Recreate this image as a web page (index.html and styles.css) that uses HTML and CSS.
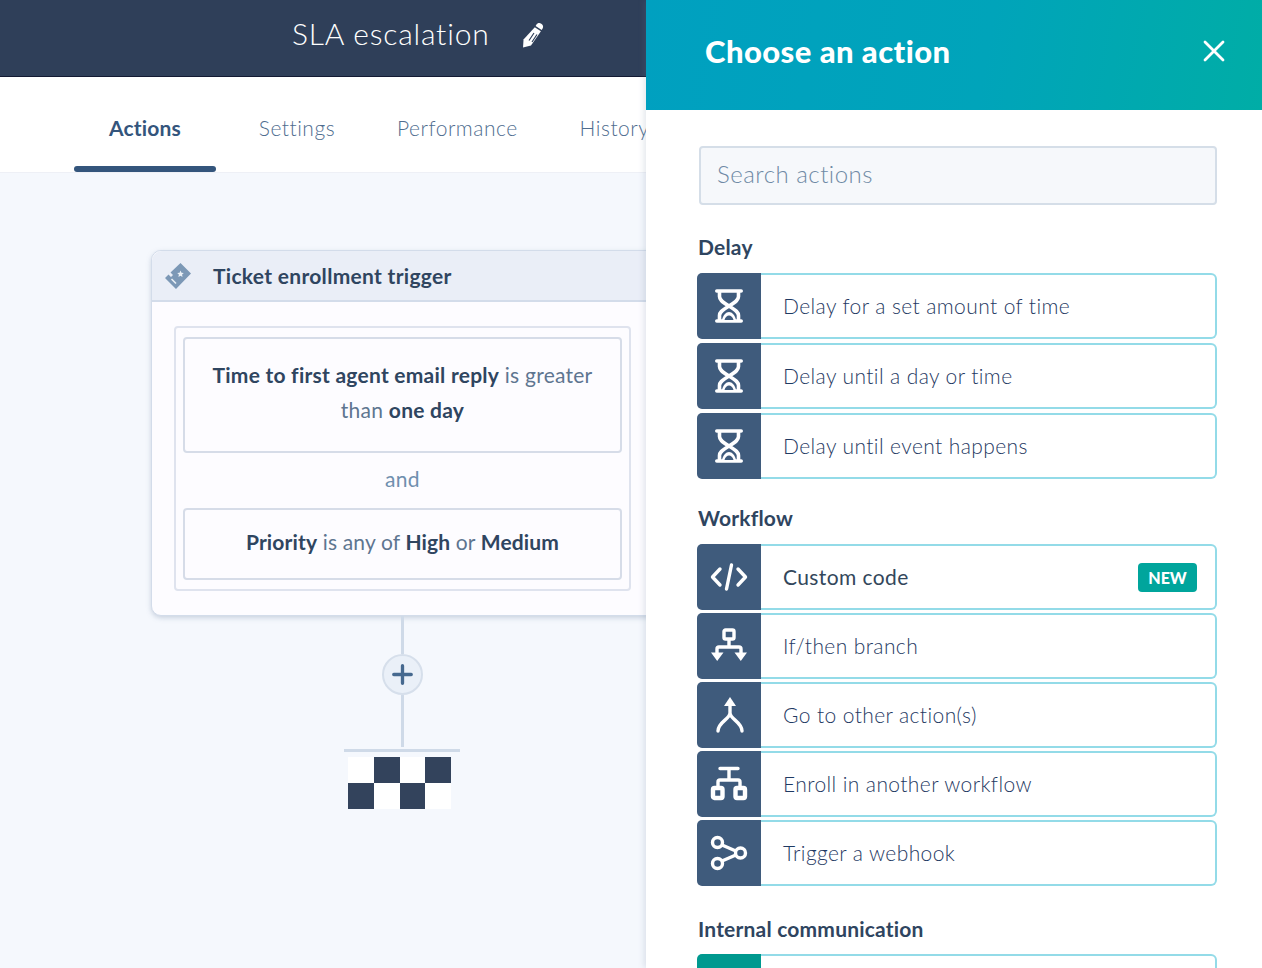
FILE: index.html
```html
<!DOCTYPE html>
<html lang="en">
<head>
<meta charset="utf-8">
<title>SLA escalation</title>
<link rel="stylesheet" href="styles.css">
</head>
<body>
<svg class="defs" width="0" height="0" aria-hidden="true">
  <symbol id="i-hourglass" viewBox="0 0 28 34">
    <path d="M1.800 2h24.400M1.800 32h24.400" fill="none" stroke="#fff" stroke-width="3.600" stroke-linecap="round"/>
    <path d="M4.500 2v5.500c0 3 2 5 9.500 9.500 7.500 4.500 9.500 6.500 9.500 9.500V32M23.500 2v5.500c0 3-2 5-9.500 9.500-7.500 4.500-9.500 6.500-9.500 9.500V32" fill="none" stroke="#fff" stroke-width="3.600"/>
    <path d="M7 31c1-5 4-8 7-8s6 3 7 8z" fill="#fff"/>
    <path d="M9.500 31c.8-3 2.600-4.600 4.500-4.600s3.700 1.600 4.500 4.600z" fill="#3f5b7c"/>
  </symbol>
</svg>

<div class="app">
  <main class="main">
    <header class="topbar">
      <h1 class="topbar-title">SLA escalation</h1>
      <svg class="pencil" viewBox="0 0 22 26" aria-hidden="true">
        <path d="M14.500 2.500c1-1.500 3-2 4.800-.8 1.900 1.200 2.300 3.200 1.300 4.800L19.700 8 13.600 4z" fill="#fff"/>
        <path d="M12.800 5.200 18.900 9.200 9 23.500 1 25.500 1.500 17.500z" fill="#fff"/>
        <path d="M12 11 7 18.500M15 12.500 10 20" stroke="#2f3f59" stroke-width="1.200" fill="none"/>
      </svg>
    </header>

    <nav class="tabs">
      <a class="tab tab-active">Actions</a>
      <a class="tab">Settings</a>
      <a class="tab">Performance</a>
      <a class="tab">History</a>
    </nav>

    <section class="canvas">
      <article class="card">
        <div class="card-head">
          <svg class="ticket" viewBox="0 0 28 28" aria-hidden="true">
            <path d="M16.500 1 27 11.500 12 27 1 16l3.500-3.500 2.500 2.500 2-2-2.500-2.500z" fill="#7c98b6"/>
            <path d="M16.500 8.500l1 2.200 2.300.3-1.700 1.600.4 2.400-2-1.200-2.100 1.100.5-2.300-1.700-1.600 2.400-.3z" fill="#eaf0f6"/>
            <path d="M7.500 17 12 21.500" stroke="#eaf0f6" stroke-width="1.600"/>
          </svg>
          <span>Ticket enrollment trigger</span>
        </div>
        <div class="card-body">
          <div class="group">
            <div class="clause clause-tall">
              <p><b>Time to first agent email reply</b> is greater</p>
              <p>than <b>one day</b></p>
            </div>
            <div class="and">and</div>
            <div class="clause clause-short">
              <p><b>Priority</b> is any of <b>High</b> or <b>Medium</b></p>
            </div>
          </div>
        </div>
      </article>

      <div class="connector">
        <span class="line line-top"></span>
        <button class="add" aria-label="Add action">
          <svg viewBox="0 0 24 24" aria-hidden="true"><path d="M12 2v20M2 12h20" stroke="#46698f" stroke-width="3.800" stroke-linecap="round"/></svg>
        </button>
        <span class="line line-bottom"></span>
        <span class="flag-pole"></span>
        <div class="flag">
          <i></i><i class="dark"></i><i></i><i class="dark"></i>
          <i class="dark"></i><i></i><i class="dark"></i><i></i>
        </div>
      </div>
    </section>
  </main>

  <aside class="panel">
    <header class="panel-head">
      <h2>Choose an action</h2>
      <svg class="close" viewBox="0 0 22 22" aria-hidden="true"><path d="M2 2l18 18M20 2 2 20" stroke="#fff" stroke-width="2.800" stroke-linecap="round"/></svg>
    </header>
    <div class="panel-body">
      <div class="search">Search actions</div>

      <h3 class="group-title title-delay">Delay</h3>
      <ul class="rows">
        <li class="row"><span class="row-icon"><svg class="ic-hg"><use href="#i-hourglass"/></svg></span><span class="row-main"><span class="row-text">Delay for a set amount of time</span></span></li>
        <li class="row"><span class="row-icon"><svg class="ic-hg"><use href="#i-hourglass"/></svg></span><span class="row-main"><span class="row-text">Delay until a day or time</span></span></li>
        <li class="row"><span class="row-icon"><svg class="ic-hg"><use href="#i-hourglass"/></svg></span><span class="row-main"><span class="row-text">Delay until event happens</span></span></li>
      </ul>

      <h3 class="group-title title-workflow">Workflow</h3>
      <ul class="rows rows-workflow">
        <li class="row">
          <span class="row-icon"><svg class="ic" viewBox="0 0 38 36" aria-hidden="true"><path d="M10 10 2.500 18 10 26M28 10l7.500 8L28 26M21.500 6 16.500 30" fill="none" stroke="#fff" stroke-width="3.400" stroke-linecap="round" stroke-linejoin="round"/></svg></span>
          <span class="row-main"><span class="row-text row-text-dark">Custom code</span><span class="badge">NEW</span></span>
        </li>
        <li class="row">
          <span class="row-icon"><svg class="ic" viewBox="0 0 38 36" aria-hidden="true"><rect x="14" y="2" width="10" height="9" rx="1.500" fill="none" stroke="#fff" stroke-width="3.400"/><path d="M19 11v8M7 27v-6a2 2 0 0 1 2-2h20a2 2 0 0 1 2 2v6" fill="none" stroke="#fff" stroke-width="3.400"/><path d="M1 24.500h12.500L7.200 33zM24.500 24.500H37L30.800 33z" fill="#fff"/></svg></span>
          <span class="row-main"><span class="row-text">If/then branch</span></span>
        </li>
        <li class="row">
          <span class="row-icon"><svg class="ic" viewBox="0 0 38 36" aria-hidden="true"><path d="M20 0 14 9h12z" fill="#fff"/><path d="M20 7v9c0 6-12 9-12 18M20 16c0 6 12 9 12 18" fill="none" stroke="#fff" stroke-width="3.400" stroke-linecap="round"/></svg></span>
          <span class="row-main"><span class="row-text">Go to other action(s)</span></span>
        </li>
        <li class="row">
          <span class="row-icon"><svg class="ic" viewBox="0 0 38 36" aria-hidden="true"><path d="M10 2.500h18M19 2.500V14M8 22v-6a2 2 0 0 1 2-2h18a2 2 0 0 1 2 2v6" fill="none" stroke="#fff" stroke-width="3.400" stroke-linecap="round"/><rect x="3" y="22" width="9.500" height="10" rx="1.500" fill="none" stroke="#fff" stroke-width="4.400"/><rect x="25.500" y="22" width="9.500" height="10" rx="1.500" fill="none" stroke="#fff" stroke-width="4.400"/></svg></span>
          <span class="row-main"><span class="row-text">Enroll in another workflow</span></span>
        </li>
        <li class="row">
          <span class="row-icon"><svg class="ic" viewBox="0 0 38 36" aria-hidden="true"><circle cx="7.500" cy="7.500" r="5" fill="none" stroke="#fff" stroke-width="3.400"/><circle cx="7.500" cy="28.500" r="5" fill="none" stroke="#fff" stroke-width="3.400"/><circle cx="30.500" cy="18" r="5" fill="none" stroke="#fff" stroke-width="3.400"/><path d="M12 10 25.800 16M12 26 25.800 20" stroke="#fff" stroke-width="3.400" fill="none"/></svg></span>
          <span class="row-main"><span class="row-text">Trigger a webhook</span></span>
        </li>
      </ul>

      <h3 class="group-title title-internal">Internal communication</h3>
      <ul class="rows">
        <li class="row row-teal"><span class="row-icon"></span><span class="row-main"></span></li>
      </ul>
    </div>
  </aside>
</div>
</body>
</html>
```

FILE: styles.css
```css
* { box-sizing: border-box; }
html, body { margin: 0; height: 100%; overflow: hidden; }
body {
  font-family: "Lato", "Noto Sans", sans-serif; color: #33475b; background: #f5f8fd;
  font-variant-ligatures: none;
}
.defs { position: absolute; }
h1, h2, h3, p, ul { margin: 0; padding: 0; }
ul { list-style: none; }

.app { display: flex; width: 1262px; height: 968px; overflow: hidden; }

.main { width: 646px; flex: none; display: flex; flex-direction: column; }
.topbar {
  height: 77px; background: #2f3f59; border-bottom: 1px solid #131a33;
  display: flex; align-items: center; padding: 0 0 10px 292px;
}
.topbar-title { font-size: 30px; font-weight: 300; color: #fff; letter-spacing: .8px; line-height: 1; }
.pencil { width: 22px; height: 26px; margin-left: 32px; margin-top: 4px; }

.tabs {
  height: 96px; background: #fff; border-bottom: 1px solid #eef0f6;
  display: flex; padding-left: 74px; white-space: nowrap;
}
.tab {
  height: 95px; padding: 5px 31px 0; display: flex; align-items: center;
  font-size: 21px; color: #4f6d8f; letter-spacing: .5px; font-weight: 300;
}
.tab-active {
  padding: 5px 35px 0; margin-right: 12px; font-weight: 700; color: #34557c;
  letter-spacing: .15px; position: relative;
}
.tab-active::after {
  content: ""; position: absolute; left: 0; right: 0; bottom: 0; height: 6px;
  background: #34557c; border-radius: 3px;
}

.canvas { flex: 1; padding: 77px 0 0 151px; background: #f5f8fd; }
.card {
  width: 502px; height: 366px; background: #fdfcff; border: 1px solid #d3dcea;
  border-radius: 10px 0 0 10px; box-shadow: 0 2px 5px rgba(120,140,170,.35);
}
.card-head {
  height: 51px; background: #eaeef7; border-bottom: 2px solid #d3dcea;
  border-radius: 10px 0 0 0; display: flex; align-items: center; padding-left: 12px;
  font-size: 21px; font-weight: 700; color: #2f4560; letter-spacing: .3px;
}
.ticket { width: 28px; height: 28px; margin-right: 21px; }
.card-body { padding: 24px 22px 0; }
.group {
  width: 457px; height: 265px; border: 2px solid #dfe3ee; border-radius: 4px;
  padding: 9px 7px 0;
}
.clause {
  border: 2px solid #d6dce8; border-radius: 4px; text-align: center;
  font-size: 21px; line-height: 35px; color: #5e7590; letter-spacing: .25px;
  white-space: nowrap;
}
.clause b { font-weight: 700; color: #2f4560; }
.clause-tall { height: 116px; padding-top: 18px; }
.clause-short { height: 72px; padding-top: 14px; letter-spacing: .15px; }
.and {
  height: 55px; padding-bottom: 4px; display: flex; align-items: center; justify-content: center;
  font-size: 21px; color: #6f8fae; letter-spacing: .3px;
}

.connector {
  width: 116px; margin-left: 193px; display: flex; flex-direction: column; align-items: center;
}
.line { width: 3px; background: #cfdae8; display: block; }
.line-top { height: 38px; }
.line-bottom { height: 52px; }
.add {
  width: 41px; height: 41px; border-radius: 50%; border: 2px solid #d6dfeb;
  background: #eaf0f8; padding: 8px; display: block;
}
.add svg { display: block; width: 21px; height: 21px; }
.flag-pole { width: 116px; height: 3px; background: #cfdae8; margin-top: 2px; }
.flag {
  width: 103px; margin: 5px 5px 0 0; display: grid; grid-template-columns: repeat(4, 25.75px);
  grid-auto-rows: 26px; background: #fff;
}
.flag .dark { background: #33435c; }

.panel {
  width: 616px; flex: none; background: #fff; position: relative; z-index: 2;
  box-shadow: -2px 0 6px rgba(100,120,150,.18);
  display: flex; flex-direction: column;
}
.panel-head {
  height: 110px; background: linear-gradient(100deg, #00a0c0 0%, #00a4ba 55%, #00ada6 100%);
  display: flex; align-items: center; justify-content: space-between;
  padding: 0 37px 9px 59px; flex: none;
}
.panel-head h2 { font-size: 31px; font-weight: 900; color: #fff; letter-spacing: .45px; }
.close { width: 22px; height: 22px; }
.panel-body { padding: 36px 45px 0 51px; }
.search {
  width: 518px; height: 59px; margin-left: 2px; border: 2px solid #d5dee8; border-radius: 4px;
  background: #f6f8fb; padding: 0 16px 4px; display: flex; align-items: center;
  font-size: 24px; font-weight: 300; color: #6f8aa5; letter-spacing: .5px;
}
.group-title { font-size: 21px; font-weight: 700; color: #2f4560; margin-left: 1px; line-height: 26px; letter-spacing: .2px; }
.title-delay { margin-top: 29px; margin-bottom: 13px; }
.title-workflow { margin-top: 26px; margin-bottom: 13px; }
.title-internal { margin-top: 30px; margin-bottom: 12px; }

.rows { display: flex; flex-direction: column; gap: 4px; }
.rows-workflow { gap: 3px; }
.row { width: 520px; height: 66px; display: flex; }
.row-icon {
  width: 64px; flex: none; background: #3f5b7c; border-radius: 5px 0 0 5px;
  display: flex; align-items: center; justify-content: center;
}
.row-main {
  flex: 1; display: flex; align-items: center; background: #fff;
  border: 2px solid #93dbe8; border-left: 0; border-radius: 0 6px 6px 0;
}
.row-text {
  padding: 0 0 2px 22px; font-size: 21px; font-weight: 300; color: #1f3a63;
  letter-spacing: .4px; flex: 1;
}
.row-text-dark { color: #33475b; font-weight: 400; }
.ic-hg { width: 28px; height: 34px; display: block; }
.ic { width: 38px; height: 36px; display: block; }
.badge {
  width: 59px; height: 29px; margin-right: 18px; background: #00a59c; border-radius: 4px;
  color: #fff; font-size: 16px; font-weight: 900; display: flex; align-items: center; justify-content: center;
}
.row-teal .row-icon { background: #00998f; }
```
